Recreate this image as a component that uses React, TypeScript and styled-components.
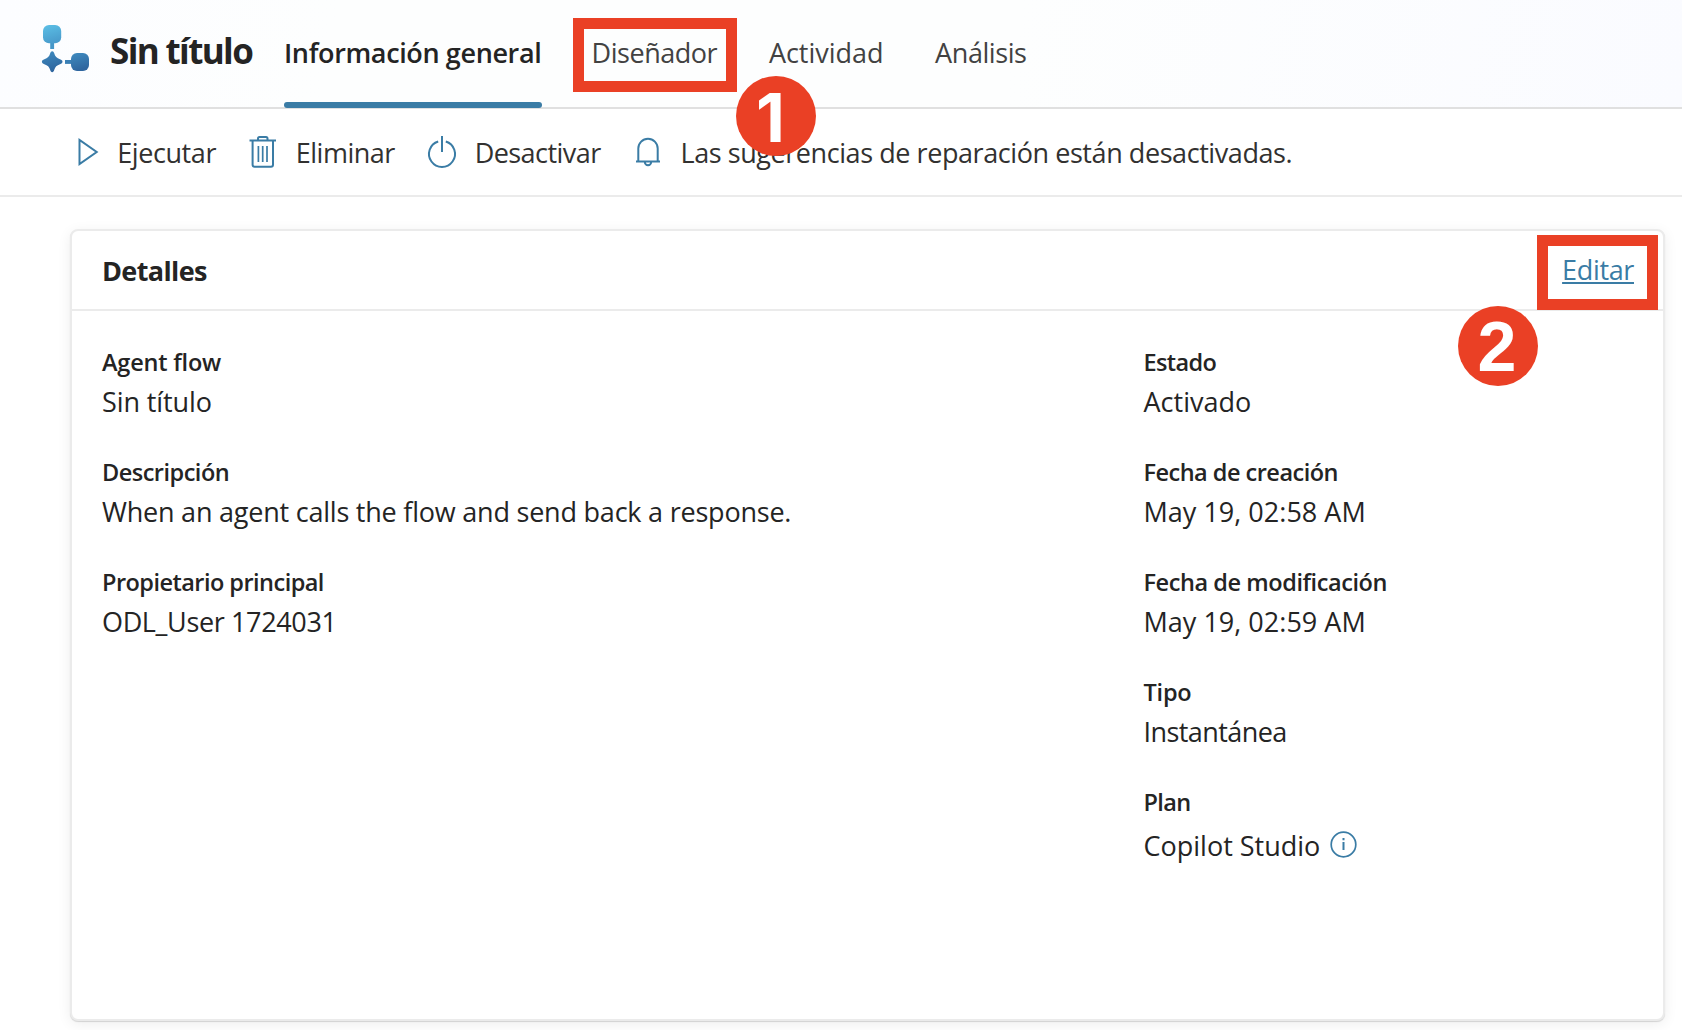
import React from 'react';
import styled, { createGlobalStyle } from 'styled-components';

const BLUE = '#3a7ca5';
const RED = '#ea4025';

const GlobalStyle = createGlobalStyle`
  *, *::before, *::after { box-sizing: border-box; }
  html, body, #root { height: 100%; }
  body {
    margin: 0;
    background: #fff;
    color: #242424;
    font-family: "Segoe UI", "Open Sans", "Noto Sans", sans-serif;
    overflow: hidden;
  }
`;

const Page = styled.div`
  position: relative;
  display: flex;
  flex-direction: column;
  width: 1682px;
  height: 1030px;
  overflow: hidden;
`;

const Header = styled.header`
  display: flex;
  flex: none;
  height: 109px;
  padding-left: 40px;
  border-bottom: 2px solid #e0e0e0;
  background: linear-gradient(100deg, #fcfdff 0%, #fdfefe 20%, #fdfefe 60%, #fafbff 100%);
`;

const Logo = styled.svg`
  flex: none;
  width: 52px;
  height: 54px;
  margin: 24px 18px 0 0;
`;

const Title = styled.h1`
  width: 174px;
  margin: 0;
  font-size: 35px;
  font-weight: 700;
  line-height: 101px;
  letter-spacing: -1.63px;
  white-space: nowrap;
`;

const Tabs = styled.nav`
  display: flex;
  gap: 51.7px;
`;

const Tab = styled.a<{ $active?: boolean; $track: number }>`
  position: relative;
  margin-right: ${p => (p.$active ? -1.5 : 0)}px;
  color: ${p => (p.$active ? '#242424' : '#424242')};
  font-size: 27px;
  font-weight: ${p => (p.$active ? 600 : 400)};
  line-height: 106px;
  letter-spacing: ${p => p.$track}px;
  white-space: nowrap;

  &::after {
    content: '';
    display: ${p => (p.$active ? 'block' : 'none')};
    position: absolute;
    left: 0;
    right: -1px;
    top: 102px;
    height: 6px;
    border-radius: 3px;
    background: ${BLUE};
  }
`;

const Toolbar = styled.div`
  display: flex;
  flex: none;
  align-items: center;
  gap: 31px;
  height: 88px;
  padding-left: 68.5px;
  border-bottom: 2px solid #ebebeb;
`;

const Command = styled.button<{ $track: number }>`
  display: flex;
  align-items: center;
  gap: 16.8px;
  padding: 0;
  border: 0;
  background: none;
  color: #323130;
  font: 400 27px/40px "Segoe UI", "Open Sans", "Noto Sans", sans-serif;
  letter-spacing: ${p => p.$track}px;
  white-space: nowrap;
`;

const CommandLabel = styled.span`
  padding-top: 2px;
`;

const CommandIcon = styled.svg`
  flex: none;
  width: 32px;
  height: 36px;
  fill: none;
  stroke: ${BLUE};
  stroke-width: 2;
`;

const Card = styled.section`
  display: flex;
  flex-direction: column;
  flex: none;
  width: 1595px;
  height: 792px;
  margin: 32px 0 0 70px;
  border: 2px solid #ebebeb;
  border-radius: 8px;
  background: #fff;
  box-shadow: 0 1px 1px rgba(0, 0, 0, 0.14), 0 3px 14px rgba(0, 0, 0, 0.07);
`;

const CardHeader = styled.div`
  display: flex;
  align-items: center;
  justify-content: space-between;
  height: 80px;
  padding: 0 29px 0 30px;
  border-bottom: 2px solid #ebebeb;
`;

const CardTitle = styled.h2`
  margin: 0;
  padding-top: 2px;
  font-size: 27px;
  font-weight: 700;
  line-height: 40px;
  letter-spacing: -0.62px;
`;

const EditLink = styled.a`
  color: ${BLUE};
  font-size: 27px;
  line-height: 40px;
  letter-spacing: -0.35px;
  text-decoration: underline;
  text-decoration-thickness: 2px;
  text-underline-offset: 2px;
`;

const CardBody = styled.div`
  display: grid;
  grid-template-columns: 1041.5px 1fr;
  padding: 35px 0 0 30px;
`;

const Column = styled.dl`
  display: flex;
  flex-direction: column;
  gap: 34px;
  margin: 0;
`;

const Label = styled.dt<{ $track: number }>`
  font-size: 23.5px;
  font-weight: 600;
  line-height: 32px;
  letter-spacing: ${p => p.$track}px;
`;

const Value = styled.dd<{ $track: number; $tall?: boolean }>`
  display: flex;
  align-items: center;
  gap: 10px;
  height: ${p => (p.$tall ? 47 : 40)}px;
  margin: 4px 0 0;
  font-size: 27px;
  line-height: 40px;
  letter-spacing: ${p => p.$track}px;
`;

const InfoIcon = styled.svg`
  width: 27px;
  height: 27px;
  margin-top: -3px;
  fill: none;
  stroke: ${BLUE};
  stroke-width: 1.7;
`;

const Frame = styled.div<{ $x: number; $y: number; $w: number; $h: number }>`
  position: absolute;
  left: ${p => p.$x}px;
  top: ${p => p.$y}px;
  width: ${p => p.$w}px;
  height: ${p => p.$h}px;
  border: 11.5px solid ${RED};
`;

const Marker = styled.div<{ $x: number; $y: number; $font: string; $size: number; $shift: number }>`
  position: absolute;
  left: ${p => p.$x}px;
  top: ${p => p.$y}px;
  display: flex;
  justify-content: center;
  width: 80px;
  height: 80px;
  padding-right: ${p => p.$shift}px;
  border-radius: 50%;
  background: ${RED};
  color: #fff;
  font-family: "${p => p.$font}", sans-serif;
  font-size: ${p => p.$size}px;
  font-weight: 700;
  line-height: 83px;
`;

type FieldProps = { label: string; lt: number; value: string; vt: number; info?: boolean };

const Field = ({ label, lt, value, vt, info }: FieldProps) => (
  <div>
    <Label $track={lt}>{label}</Label>
    <Value $track={vt} $tall={info}>
      {value}
      {info && (
        <InfoIcon viewBox="0 0 27 27">
          <circle cx="13.5" cy="13.5" r="12.3" />
          <path d="M13.5 11v8M13.5 7v2.2" strokeWidth="2" />
        </InfoIcon>
      )}
    </Value>
  </div>
);

const leftFields: FieldProps[] = [
  { label: 'Agent flow', lt: -0.2, value: 'Sin título', vt: -0.1 },
  { label: 'Descripción', lt: -0.5, value: 'When an agent calls the flow and send back a response.', vt: -0.22 },
  { label: 'Propietario principal', lt: -0.53, value: 'ODL_User 1724031', vt: -0.36 },
];

const rightFields: FieldProps[] = [
  { label: 'Estado', lt: -0.6, value: 'Activado', vt: 0 },
  { label: 'Fecha de creación', lt: -0.51, value: 'May 19, 02:58 AM', vt: 0.02 },
  { label: 'Fecha de modificación', lt: -0.43, value: 'May 19, 02:59 AM', vt: 0.02 },
  { label: 'Tipo', lt: -0.22, value: 'Instantánea', vt: -0.57 },
  { label: 'Plan', lt: -0.6, value: 'Copilot Studio', vt: 0, info: true },
];

export default function App() {
  return (
    <>
      <GlobalStyle />
      <Page>
        <Header>
          <Logo viewBox="40 24 52 54">
            <defs>
              <linearGradient id="flowTop" x1="0" y1="0" x2="0.3" y2="1">
                <stop offset="0" stopColor="#5cc0e6" />
                <stop offset="1" stopColor="#4a9dcd" />
              </linearGradient>
              <linearGradient id="flowStar" x1="0" y1="0" x2="0.3" y2="1">
                <stop offset="0" stopColor="#3f8cc0" />
                <stop offset="1" stopColor="#2f669f" />
              </linearGradient>
            </defs>
            <path d="M50.2 42h3.9v7h-3.9z" fill="#4597c8" />
            <rect x="43" y="25" width="18.2" height="18.2" rx="6" fill="url(#flowTop)" />
            <path d="M65 60h7v3.9h-7z" fill="#3a7fb5" />
            <rect x="71" y="53" width="18" height="18" rx="6" fill="url(#flowStar)" />
            <path
              d="M52.2 51.3c1 0 1.6.8 2 2 .9 3.2 2.6 4.9 5.8 5.900 1.500.4 2.500 1.200 2.500 2.500s-1 2-2.500 2.500c-3.200 1-4.900 2.700-5.800 5.900-.4 1.300-1 2.100-2 2.100s-1.600-.8-2-2.100c-.9-3.200-2.600-4.900-5.800-5.900-1.500-.5-2.500-1.200-2.500-2.500s1-2.100 2.500-2.500c3.200-1 4.900-2.700 5.800-5.900.4-1.200 1-2 2-2z"
              fill="url(#flowStar)"
            />
          </Logo>
          <Title>Sin título</Title>
          <Tabs>
            <Tab $active $track={-0.37}>Información general</Tab>
            <Tab $track={-0.46}>Diseñador</Tab>
            <Tab $track={-0.03}>Actividad</Tab>
            <Tab $track={-0.42}>Análisis</Tab>
          </Tabs>
        </Header>

        <Toolbar>
          <Command $track={-0.43}>
            <CommandIcon viewBox="0 0 32 36">
              <path d="M10.500 6v24l17.200-12z" />
            </CommandIcon>
            <CommandLabel>Ejecutar</CommandLabel>
          </Command>
          <Command $track={-0.5}>
            <CommandIcon viewBox="0 0 32 36">
              <path d="M2.500 6.600h26.500M11 6.600V4.500q0-1.500 1.500-1.500h6.500q1.500 0 1.500 1.500V6.600M5.600 6.600v24.200q0 2 2 2h16.400q2 0 2-2V6.600" />
              <path d="M11.400 12v16M15.700 12v16M20 12v16" strokeWidth="1.700" />
            </CommandIcon>
            <CommandLabel>Eliminar</CommandLabel>
          </Command>
          <Command $track={-0.55}>
            <CommandIcon viewBox="0 0 32 36">
              <path d="M16 2v16M12.200 7.500A13 13 0 1 0 19.800 7.500" />
            </CommandIcon>
            <CommandLabel>Desactivar</CommandLabel>
          </Command>
          <Command $track={-0.43}>
            <CommandIcon viewBox="0 0 32 36">
              <path d="M6.300 27.500V14.500a9.700 9.700 0 0 1 19.400 0V27.500M4 27.500h24M12.800 28a3.200 3.200 0 0 0 6.400 0" />
            </CommandIcon>
            <CommandLabel>Las sugerencias de reparación están desactivadas.</CommandLabel>
          </Command>
        </Toolbar>

        <Card>
          <CardHeader>
            <CardTitle>Detalles</CardTitle>
            <EditLink>Editar</EditLink>
          </CardHeader>
          <CardBody>
            <Column>
              {leftFields.map(f => <Field key={f.label} {...f} />)}
            </Column>
            <Column>
              {rightFields.map(f => <Field key={f.label} {...f} />)}
            </Column>
          </CardBody>
        </Card>

        <Frame $x={573} $y={17.5} $w={163.500} $h={74.500} />
        <Marker $x={736} $y={75.500} $font="Inter" $size={67} $shift={11}>1</Marker>
        <Frame $x={1537} $y={234.500} $w={120.500} $h={75.500} />
        <Marker $x={1457.500} $y={306} $font="Liberation Sans" $size={70} $shift={1}>2</Marker>
      </Page>
    </>
  );
}
